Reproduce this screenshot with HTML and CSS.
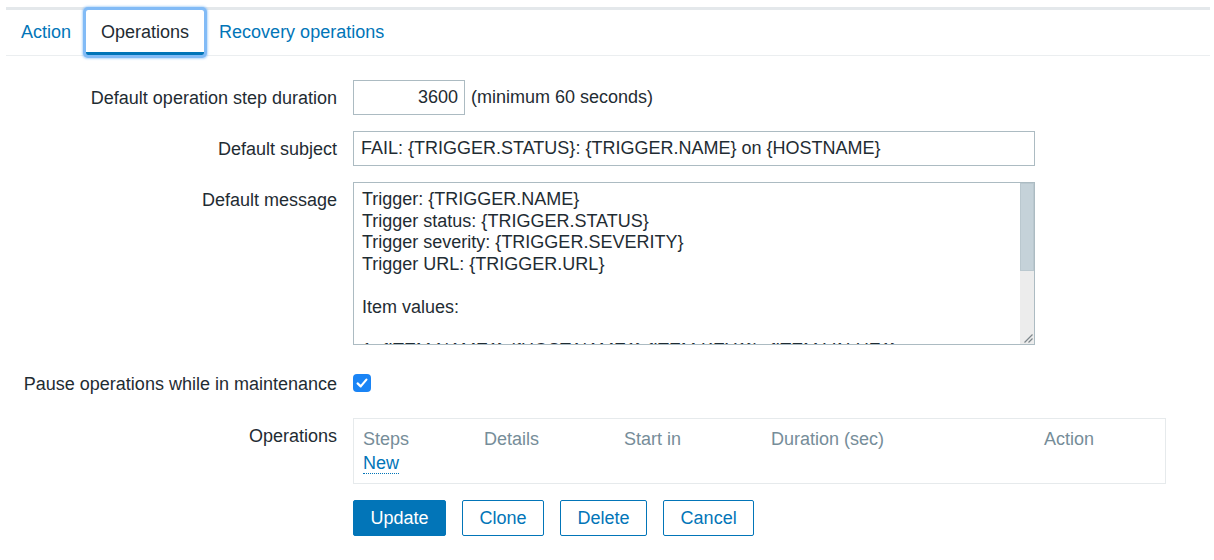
FILE: index.html
```html
<!DOCTYPE html>
<html lang="en">
<head>
<meta charset="utf-8">
<title>Action - Operations</title>
<link rel="stylesheet" href="styles.css">
</head>
<body>
<div class="page">
  <nav class="tabs">
    <a class="tab" href="#">Action</a>
    <a class="tab tab-active" href="#">Operations</a>
    <a class="tab" href="#">Recovery operations</a>
  </nav>

  <form class="form">
    <div class="row">
      <label class="label">Default operation step duration</label>
      <div class="control inline">
        <input class="input input-short" type="text" value="3600">
        <span class="hint">(minimum 60 seconds)</span>
      </div>
    </div>

    <div class="row">
      <label class="label">Default subject</label>
      <div class="control">
        <input class="input input-wide" type="text" value="FAIL: {TRIGGER.STATUS}: {TRIGGER.NAME} on {HOSTNAME}">
      </div>
    </div>

    <div class="row">
      <label class="label">Default message</label>
      <div class="control">
        <div class="textarea-box">
          <textarea class="textarea">Trigger: {TRIGGER.NAME}
Trigger status: {TRIGGER.STATUS}
Trigger severity: {TRIGGER.SEVERITY}
Trigger URL: {TRIGGER.URL}

Item values:

1. {ITEM.NAME1} ({HOST.NAME1}:{ITEM.KEY1}): {ITEM.VALUE1}
2. {ITEM.NAME2} ({HOST.NAME2}:{ITEM.KEY2}): {ITEM.VALUE2}
3. {ITEM.NAME3} ({HOST.NAME3}:{ITEM.KEY3}): {ITEM.VALUE3}

Original event ID: {EVENT.ID}</textarea>
          <div class="scrollbar" aria-hidden="true">
            <div class="scroll-thumb"></div>
            <div class="scroll-track"></div>
            <div class="resizer">
              <svg width="14" height="14" viewBox="0 0 14 14"><path d="M12.5 4.5 L4.5 12.5 M12.5 8.5 L8.5 12.5" stroke="#7d868b" stroke-width="1.2" fill="none"/></svg>
            </div>
          </div>
        </div>
      </div>
    </div>

    <div class="row row-check">
      <label class="label">Pause operations while in maintenance</label>
      <div class="control">
        <span class="checkbox" role="checkbox" aria-checked="true">
          <svg width="18" height="18" viewBox="0 0 18 18"><path d="M4.6 9.4 L7.7 12.4 L13.4 5.6" fill="none" stroke="#fff" stroke-width="2.2" stroke-linecap="round" stroke-linejoin="round"/></svg>
        </span>
      </div>
    </div>

    <div class="row">
      <label class="label">Operations</label>
      <div class="control">
        <div class="ops">
          <div class="ops-head">
            <span>Steps</span>
            <span>Details</span>
            <span>Start in</span>
            <span>Duration (sec)</span>
            <span>Action</span>
          </div>
          <div class="ops-body">
            <a class="link-new" href="#">New</a>
          </div>
        </div>
      </div>
    </div>

    <div class="row">
      <span class="label"></span>
      <div class="control buttons">
        <button type="button" class="btn btn-primary">Update</button>
        <button type="button" class="btn">Clone</button>
        <button type="button" class="btn">Delete</button>
        <button type="button" class="btn">Cancel</button>
      </div>
    </div>
  </form>
</div>
</body>
</html>
```

FILE: styles.css
```css
* { box-sizing: border-box; }

html, body {
  margin: 0;
  background: #fff;
}

body {
  font-family: "Liberation Sans", Arial, Helvetica, sans-serif;
  font-size: 18px;
  color: #1f2c33;
}

.page {
  margin: 7px 4px 0 6px;
  border-top: 3px solid #e4e8eb;
}

/* Tabs */
.tabs {
  display: flex;
  height: 46px;
  border-bottom: 1px solid #ebeef0;
}

.tab {
  display: block;
  padding: 3px 15px 0;
  line-height: 39px;
  height: 45px;
  color: #0275b8;
  text-decoration: none;
  border-bottom: 3px solid transparent;
}

.tab-active {
  color: #1f2c33;
  border-bottom-color: #0275b8;
  border-radius: 2px;
  box-shadow: 0 0 0 3px #82bbf6, 0 0 2px 4px rgba(130, 187, 246, 0.55);
  position: relative;
}

/* Form */
.form {
  display: flex;
  flex-direction: column;
  gap: 16px;
  padding-top: 24px;
}

.row {
  display: grid;
  grid-template-columns: 331px 1fr;
  column-gap: 16px;
  align-items: start;
}

.label {
  text-align: right;
  line-height: 22px;
  padding-top: 7px;
}

.control.inline {
  display: flex;
  align-items: center;
  gap: 6px;
}

.input {
  height: 35px;
  border: 1px solid #acbbc2;
  font: inherit;
  color: #1f2c33;
  padding: 0 7px;
  background: #fff;
  outline: none;
}

.input-short {
  width: 112px;
  text-align: right;
  padding-right: 6px;
}

.input-wide {
  width: 682px;
}

/* Textarea with its scrollbar */
.textarea-box {
  display: flex;
  width: 682px;
  height: 163px;
  border: 1px solid #acbbc2;
  background: #fff;
}

.textarea {
  flex: 1;
  min-width: 0;
  border: none;
  padding: 6px 8px;
  font: inherit;
  line-height: 21.6px;
  color: #1f2c33;
  resize: none;
  overflow: hidden;
  outline: none;
  white-space: pre;
}

.scrollbar {
  width: 14px;
  display: flex;
  flex-direction: column;
  background: #ececec;
}

.scroll-thumb {
  height: 88px;
  background: #c5d2d9;
  border: 1px solid #bac8cf;
}

.scroll-track {
  flex: 1;
}

.resizer {
  height: 14px;
}

.resizer svg {
  display: block;
}

/* Checkbox row */
.row-check {
  min-height: 36px;
  margin-top: 5px;
}

.checkbox {
  display: block;
  width: 18px;
  height: 18px;
  margin-top: 8px;
  border-radius: 4px;
  background: #1a84f5;
}

.checkbox svg {
  display: block;
}

/* Operations table */
.ops {
  width: 813px;
  border: 1px solid #e6eaec;
  padding: 9px 9px 9px;
}

.ops-head {
  display: grid;
  grid-template-columns: 121px 140px 147px 273px 1fr;
  line-height: 22px;
  color: #768d99;
}

.ops-body {
  padding-top: 2px;
  line-height: 22px;
}

.link-new {
  color: #0275b8;
  text-decoration: none;
  border-bottom: 1px dotted #0275b8;
}

/* Buttons */
.buttons {
  display: flex;
  gap: 16px;
}

.btn {
  height: 36px;
  padding: 0 16.5px;
  border: 1px solid #0275b8;
  border-radius: 2px;
  background: #fff;
  color: #0275b8;
  font: inherit;
  cursor: pointer;
}

.btn-primary {
  background: #0275b8;
  color: #fff;
}
```
